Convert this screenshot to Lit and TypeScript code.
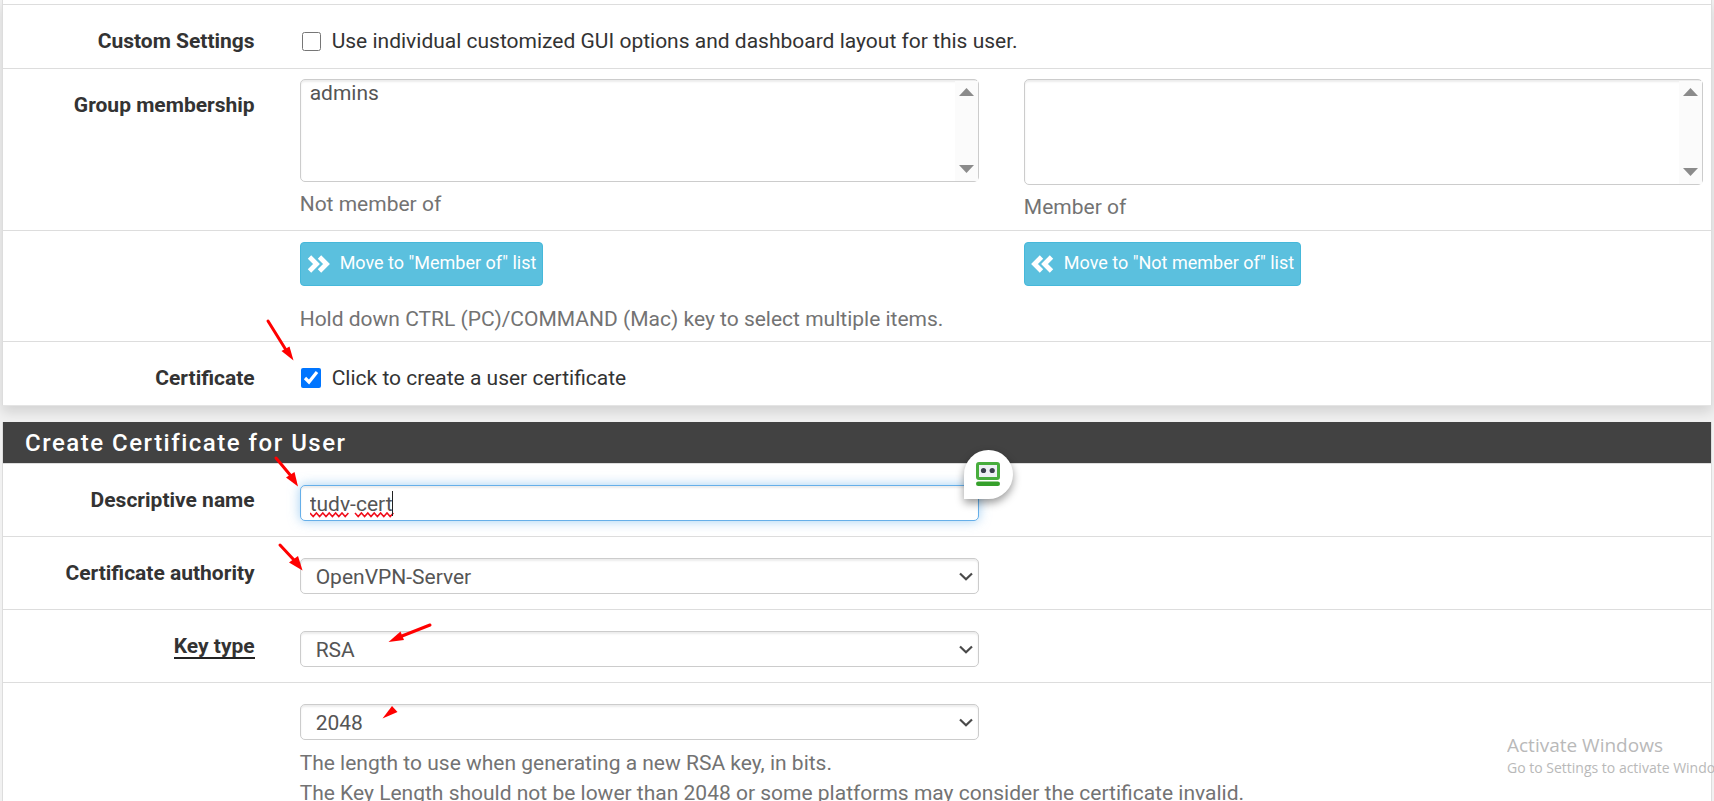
import { LitElement, html, css, svg } from "lit";
import { customElement, property } from "lit/decorators.js";

const scrollArrow = (d: string) => html`<svg class="arrow" width="15" height="8" viewBox="0 0 15 8" aria-hidden="true"><path d=${d} fill="#8b8b8b"></path></svg>`;

@customElement("group-list")
export class GroupList extends LitElement {
  @property() caption = "";
  @property({ type: Array }) items: string[] = [];
  @property({ type: Boolean }) tall = false;

  static styles = css`
    :host { display: block; }
    .box { position: relative; }
    select {
      display: block; box-sizing: border-box; width: 100%; height: 103px;
      margin: 0; padding: 0 10px 0 8px; border: 1px solid #ccc; border-radius: 5px;
      background: #fff; color: #555; font: 21px/28px Roboto, sans-serif;
      box-shadow: inset 0 2px 2px rgba(0, 0, 0, 0.075); overflow: hidden; outline: none;
    }
    select.tall { height: 106px; }
    option { padding: 1px 1px 0; min-height: 28px; }
    .bar {
      position: absolute; top: 2px; right: 1px; bottom: 1px; width: 23px;
      box-sizing: border-box; padding: 7px 0 8px; background: #fbfbfb;
      display: flex; flex-direction: column; justify-content: space-between; align-items: center;
    }
    label { display: block; margin-top: 7px; color: #737373; line-height: 30px; }
  `;

  render() {
    return html`
      <div class="box">
        <select id="list" multiple class=${this.tall ? "tall" : ""}>
          ${this.items.map((i) => html`<option>${i}</option>`)}
        </select>
        <div class="bar">
          ${scrollArrow("M7.5 0 15 8H0z")}
          ${scrollArrow("M0 0H15L7.5 8z")}
        </div>
      </div>
      <label for="list">${this.caption}</label>
    `;
  }
}

const chevrons = (flip: boolean) => html`<svg class=${flip ? "flip" : ""} width="23" height="18" viewBox="0 0 23 18" aria-hidden="true">
  <path d="M2.500 2 9.500 9 2.500 16M12.500 2 19.500 9 12.500 16" fill="none" stroke="#fff" stroke-width="4.800"></path></svg>`;

const pointer = (line: string, head: string) => svg`<path d=${line} stroke="#f00" stroke-width="3" stroke-linecap="round"></path><path d=${head} fill="#f00"></path>`;

const wave = (x: number, peaks: number) => `M${x} 24` + "l3.2 3.6 3.2-3.6".repeat(peaks);

@customElement("app-root")
export class AppRoot extends LitElement {
  static styles = css`
    :host {
      display: block; position: relative; height: 100vh; overflow: hidden;
      box-sizing: border-box; padding: 0 2px; background: #f1f1f1; color: #333;
      font: 21px/30px Roboto, sans-serif;
    }
    .panel {
      background: #fff; border: 1px solid #ddd; border-top: 0; overflow: hidden;
    }
    .panel.first { padding-top: 4px; border-bottom-color: #e4e4e4; }
    .shadow { box-shadow: 0 6px 12px rgba(0, 0, 0, 0.13); margin-bottom: 16px; }
    h2 {
      margin: 0; padding: 1px 22px 0; background: #424242; color: #fff;
      font-size: 24px; font-weight: 500; line-height: 40px; letter-spacing: 1.5px;
      border-bottom: 1px solid #ddd;
    }
    .row {
      display: grid; grid-template-columns: 2fr 5fr 5fr; margin: 0 -15px;
      border-top: 1px solid #ddd;
    }
    h2 + .row { border-top: 0; }
    .row > * { box-sizing: border-box; padding: 0 23px 0 22px; min-width: 0; }
    .name { margin-top: 21px; text-align: right; font-weight: 700; white-space: nowrap; }
    .wide { grid-column: span 2; }
    .row > .tick { padding-top: 21px; padding-bottom: 12px; }
    .tick label { display: flex; align-items: center; width: fit-content; }
    .tick input { width: 20px; height: 20px; margin: 0 11px 0 1px; }
    .tick .open { width: 19px; height: 19px; margin: 0 11px 0 2px; }
    .row > .lists { padding-top: 10px; padding-bottom: 8px; }
    .row > .move { padding-top: 11px; padding-bottom: 7px; }
    button {
      display: inline-flex; align-items: center; gap: 10px; height: 44px; padding: 0 6px;
      border: 1px solid #46b8da; border-radius: 4px; background: #5bc0de; color: #fff;
      font: 18px/26px Roboto, sans-serif; white-space: nowrap;
    }
    button span { padding-bottom: 2px; }
    .flip { transform: scaleX(-1); }
    .move p { margin: 18px 0 0; }
    p { margin: 0; color: #737373; }
    .row > .field { padding-top: 21px; padding-bottom: 15px; }
    .control { position: relative; }
    .text, .pick {
      display: block; box-sizing: border-box; width: 100%; height: 36px; margin: 0;
      border: 1px solid #ccc; border-radius: 5px; background: #fff; color: #555;
      font: 21px/30px Roboto, sans-serif; box-shadow: inset 0 2px 2px rgba(0, 0, 0, 0.075);
      outline: none;
    }
    .text {
      padding: 2px 9px 0; border-color: #66afe9;
      box-shadow: inset 0 2px 2px rgba(0, 0, 0, 0.075), 0 0 12px rgba(102, 175, 233, 0.6);
    }
    .pick { appearance: none; padding: 2px 32px 0 15px; }
    .chevron { position: absolute; right: 6px; top: 14px; pointer-events: none; }
    .spell { position: absolute; left: 10px; top: 4px; pointer-events: none; }
    .badge {
      position: absolute; right: -34px; top: -35px; width: 49px; height: 49px;
      box-sizing: border-box; border-radius: 50% 50% 50% 0; background: #fff; padding: 12px;
      box-shadow: 0 4px 8px rgba(0, 0, 0, 0.4); z-index: 1; line-height: 0;
    }
    .help { margin-top: 8px; white-space: nowrap; }
    .term { border-bottom: 2px solid #222; line-height: 22px; display: inline-block; margin-top: 4px; }
    .marks { position: absolute; left: 0; top: 0; z-index: 2; pointer-events: none; }
    .notice {
      position: absolute; right: 0; bottom: 23px; width: 207px; overflow: hidden;
      white-space: nowrap; color: #b9b9b9; font-family: "Open Sans", "Noto Sans", sans-serif;
      font-size: 14px; line-height: 20px; pointer-events: none;
    }
    .notice strong { display: block; font-size: 19px; font-weight: 400; line-height: 26px; }
  `;

  private picker(id: string, label: string, value: string) {
    return html`<div class="control">
      <select class="pick" id=${id} aria-label=${label}><option>${value}</option></select>
      <svg class="chevron" width="14" height="9" viewBox="0 0 14 9" aria-hidden="true"><path d="M1 1.500 7 7.300 13 1.500" fill="none" stroke="#4a4a4a" stroke-width="2.200"></path></svg>
    </div>`;
  }

  render() {
    return html`
      <div class="shadow"><section class="panel first">
        <div class="row">
          <div class="name">Custom Settings</div>
          <div class="wide tick"><label><input class="open" type="checkbox" />Use individual customized GUI options and dashboard layout for this user.</label></div>
        </div>
        <div class="row">
          <div class="name">Group membership</div>
          <group-list class="lists" caption="Not member of" .items=${["admins"]}></group-list>
          <group-list class="lists" caption="Member of" tall></group-list>
        </div>
        <div class="row">
          <div></div>
          <div class="move">
            <button type="button">${chevrons(false)}<span>Move to "Member of" list</span></button>
            <p>Hold down CTRL (PC)/COMMAND (Mac) key to select multiple items.</p>
          </div>
          <div class="move"><button type="button">${chevrons(true)}<span>Move to "Not member of" list</span></button></div>
        </div>
        <div class="row">
          <div class="name">Certificate</div>
          <div class="wide tick"><label><input type="checkbox" checked />Click to create a user certificate</label></div>
        </div>
      </section></div>
      <section class="panel">
        <h2>Create Certificate for User</h2>
        <div class="row">
          <label class="name" for="descr">Descriptive name</label>
          <div class="field"><div class="control">
            <input class="text" id="descr" type="text" value="tudv-cert" spellcheck="false" />
            <svg class="spell" width="84" height="30" viewBox="0 0 84 30" aria-hidden="true">
              <path d=${wave(0, 6) + wave(45, 6)} fill="none" stroke="#f00d1a" stroke-width="1.500"></path>
              <path d="M82.500 2V27" stroke="#222"></path>
            </svg>
            <div class="badge"><svg width="25" height="25" viewBox="0 0 25 25" aria-hidden="true">
              <rect x="1.500" y="1.500" width="21" height="15" rx="1.500" fill="#eef0f4" stroke="#48ad3d" stroke-width="3"></rect>
              <circle cx="7.500" cy="8.500" r="2.600" fill="#3b3f4c"></circle><circle cx="16.200" cy="8.500" r="2.600" fill="#3b3f4c"></circle>
              <rect x="0" y="19.500" width="24" height="4.500" rx="2.200" fill="#35a02b"></rect>
            </svg></div>
          </div></div>
        </div>
        <div class="row">
          <label class="name" for="ca">Certificate authority</label>
          <div class="field">${this.picker("ca", "Certificate authority", "OpenVPN-Server")}</div>
        </div>
        <div class="row">
          <label class="name" for="keytype"><span class="term">Key type</span></label>
          <div class="field">${this.picker("keytype", "Key type", "RSA")}</div>
        </div>
        <div class="row">
          <div></div>
          <div class="field">
            ${this.picker("keylen", "Key length", "2048")}
            <p class="help">The length to use when generating a new RSA key, in bits.<br />The Key Length should not be lower than 2048 or some platforms may consider the certificate invalid.</p>
          </div>
        </div>
      </section>
      <svg class="marks" width="450" height="730" viewBox="0 0 450 730" fill="none" aria-hidden="true">
        ${pointer("M268 321 286 350", "M293.500 360.500 281.500 351 289.500 346.500z")}
        ${pointer("M276 458 291 476", "M298 486.500 286 477.500 294.500 472z")}
        ${pointer("M280 545 294 560", "M302.500 570.500 289 562.500 298 556z")}
        ${pointer("M430 625 402 636", "M388.500 642 404 640 400.500 631.500z")}
        <path d="M392 706 397.500 712 382.500 718.500z" fill="#f00"></path>
      </svg>
      <div class="notice"><strong>Activate Windows</strong>Go to Settings to activate Windows.</div>
    `;
  }
}
